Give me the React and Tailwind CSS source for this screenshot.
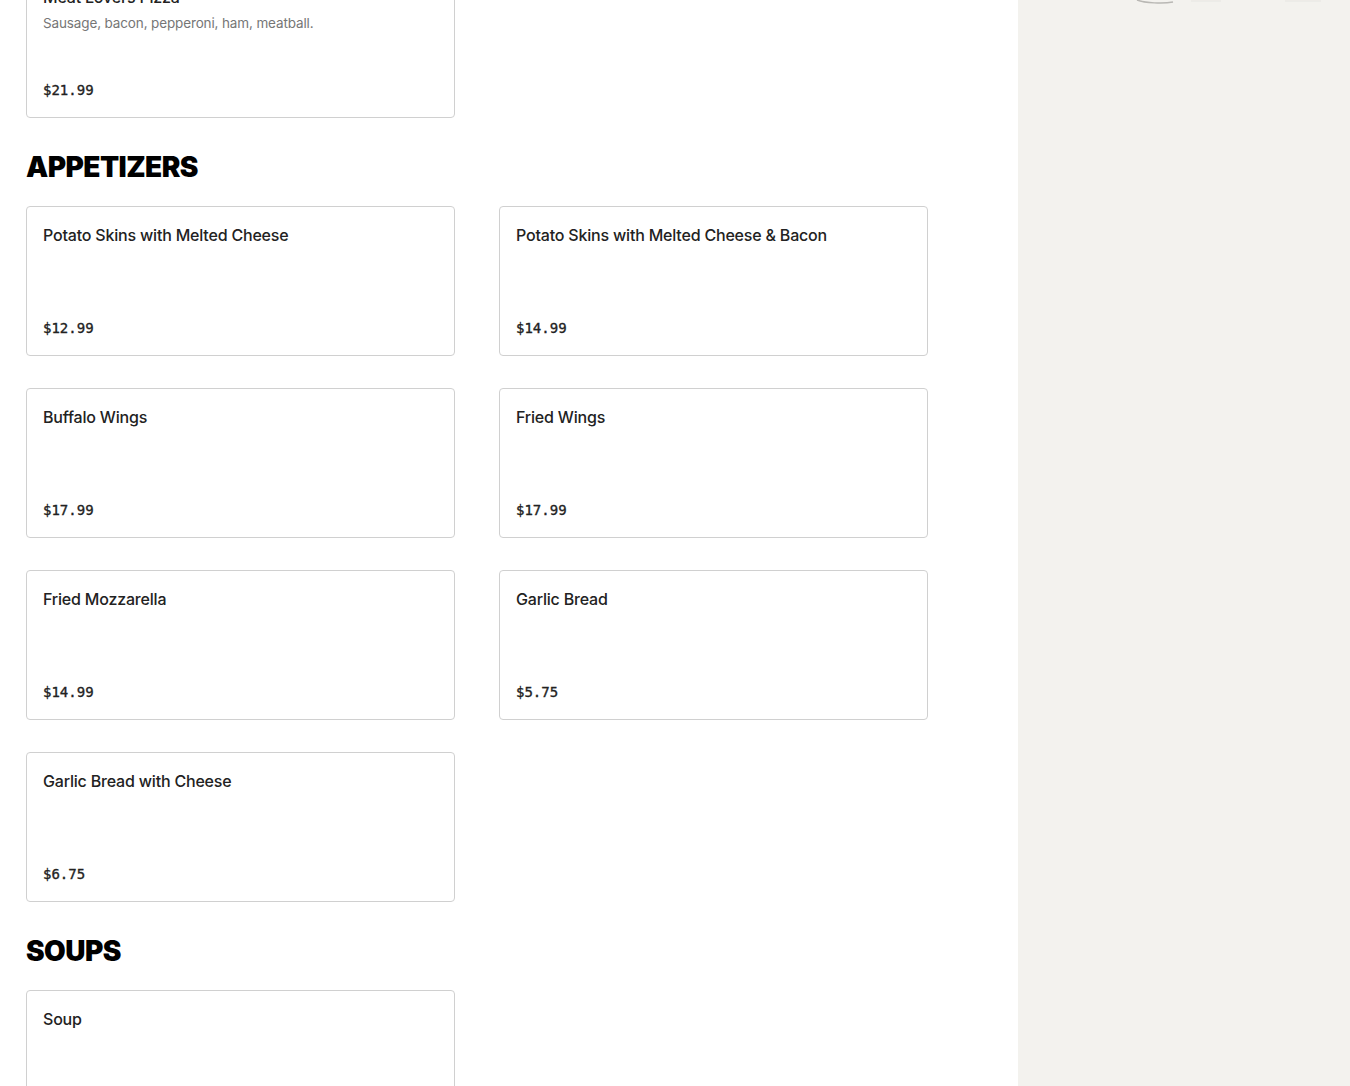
const sections = [
  {
    title: null,
    items: [
      { name: 'Meat Lovers Pizza', desc: 'Sausage, bacon, pepperoni, ham, meatball.', price: '$21.99' },
    ],
  },
  {
    title: 'APPETIZERS',
    items: [
      { name: 'Potato Skins with Melted Cheese', price: '$12.99' },
      { name: 'Potato Skins with Melted Cheese & Bacon', price: '$14.99' },
      { name: 'Buffalo Wings', price: '$17.99' },
      { name: 'Fried Wings', price: '$17.99' },
      { name: 'Fried Mozzarella', price: '$14.99' },
      { name: 'Garlic Bread', price: '$5.75' },
      { name: 'Garlic Bread with Cheese', price: '$6.75' },
    ],
  },
  {
    title: 'SOUPS',
    items: [{ name: 'Soup', price: '$6.99' }],
  },
];

function MenuCard({ item }) {
  return (
    <div className="flex h-[150px] flex-col justify-between rounded border border-[#d0d0d0] bg-white px-4 pt-4 pb-[17px]">
      <div>
        <h3 className="text-base leading-6 font-medium tracking-[-0.012em] text-[#222]">{item.name}</h3>
        {item.desc && (
          <p className="mt-[4px] text-[13.5px] leading-5 tracking-[-0.01em] text-[#767676]">{item.desc}</p>
        )}
      </div>
      <p className="font-['DejaVu_Sans_Mono',monospace] text-sm leading-5 text-[#222] [-webkit-text-stroke:0.35px_#222]">
        {item.price}
      </p>
    </div>
  );
}

export default function App() {
  return (
    <div className="flex h-[1086px] overflow-hidden bg-white font-['Inter',sans-serif]">
      <main className="w-[1018px] shrink-0 pl-[26px]">
        <div className="-mt-[32px] w-[902px]">
          {sections.map((section, i) => (
            <section key={i} className={section.title ? 'mt-[29px]' : ''}>
              {section.title && (
                <h2 className="mb-[19px] text-[28px] leading-[40px] font-black tracking-[-0.02em] text-black">
                  {section.title}
                </h2>
              )}
              <div className="grid grid-cols-2 gap-x-[44px] gap-y-[32px]">
                {section.items.map((item) => (
                  <MenuCard key={item.name} item={item} />
                ))}
              </div>
            </section>
          ))}
        </div>
      </main>
      <aside className="relative flex-1 bg-[#f3f2ee]">
        <svg className="absolute top-0 left-[115px]" width="200" height="6" viewBox="0 0 200 6" fill="none">
          <path d="M4 0 C 12 3, 30 4, 40 2" stroke="#b9b8b4" strokeWidth="1.5" />
          <path d="M58 1 H 88" stroke="#e6e5e1" strokeWidth="1" />
          <path d="M152 1 H 188" stroke="#e6e5e1" strokeWidth="1" />
        </svg>
      </aside>
    </div>
  );
}
